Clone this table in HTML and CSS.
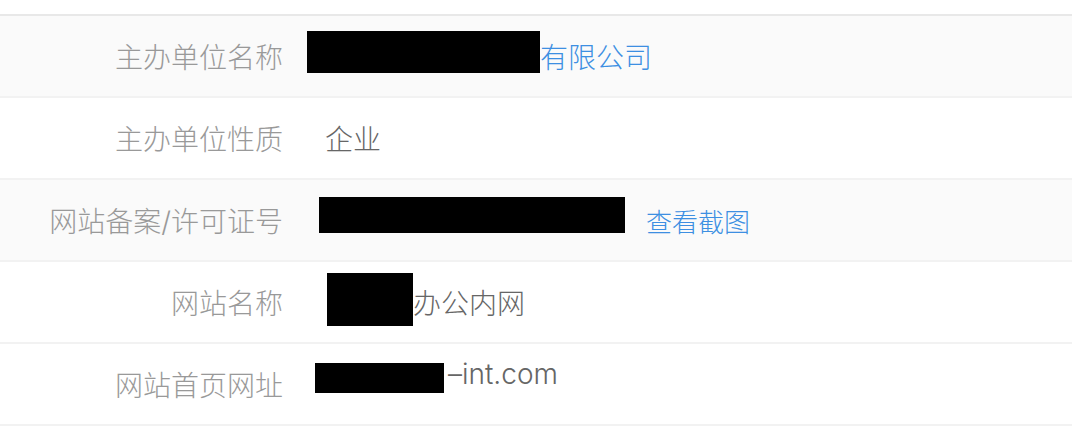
FILE: index.html
```html
<!DOCTYPE html>
<html lang="zh-CN">
  <head>
    <meta charset="UTF-8" />
    <meta name="viewport" content="width=device-width, initial-scale=1.0" />
    <title>备案信息</title>
    <link rel="stylesheet" href="styles.css">
  </head>
  <body>
    <div class="record">
      <div class="row shaded">
        <div class="label">主办单位名称</div>
        <div class="value">
          <span class="redact r1"></span><a class="link" href="#">有限公司</a>
        </div>
      </div>
      <div class="row">
        <div class="label">主办单位性质</div>
        <div class="value">企业</div>
      </div>
      <div class="row shaded">
        <div class="label">网站备案/许可证号</div>
        <div class="value">
          <span class="redact r3"></span><a class="link shot" href="#">查看截图</a>
        </div>
      </div>
      <div class="row">
        <div class="label">网站名称</div>
        <div class="value">
          <span class="redact r4"></span>办公内网
        </div>
      </div>
      <div class="row">
        <div class="label">网站首页网址</div>
        <div class="value raised">
          <span class="redact r5"></span><span class="domain">–int.com</span>
        </div>
      </div>
    </div>
  </body>
</html>
```
FILE: styles.css
```css
* {
  box-sizing: border-box;
}
body {
  margin: 0;
  background: #fff;
  font-family: "Inter", "Noto Sans CJK SC", sans-serif;
  font-size: 28px;
  font-weight: 300;
}
.record {
  margin-top: 14px;
  border-top: 2px solid #e8e8e8;
}
.row {
  display: grid;
  grid-template-columns: 283px 1fr;
  column-gap: 42px;
  height: 82px;
  border-bottom: 2px solid #f2f2f2;
}
.shaded {
  background: #fafafa;
}
.label {
  display: flex;
  align-items: center;
  justify-content: flex-end;
  color: #999;
  white-space: nowrap;
}
.value {
  display: flex;
  align-items: center;
  color: #666;
  white-space: nowrap;
}
.raised {
  padding-bottom: 20px;
}
.domain {
  margin-left: 4px;
}
.link {
  color: #3d8fe2;
  text-decoration: none;
}
.shot {
  margin-left: 21px;
  font-size: 26px;
}
.redact {
  flex: none;
  background: #000;
}
.r1 {
  width: 233px;
  height: 42px;
  margin-left: -18px;
  margin-bottom: 8px;
}
.r3 {
  width: 306px;
  height: 36px;
  margin-left: -6px;
  margin-bottom: 11px;
}
.r4 {
  width: 86px;
  height: 53px;
  margin-left: 2px;
  margin-bottom: 6px;
}
.r5 {
  width: 129px;
  height: 30px;
  margin-left: -10px;
  margin-top: 8px;
}
```
